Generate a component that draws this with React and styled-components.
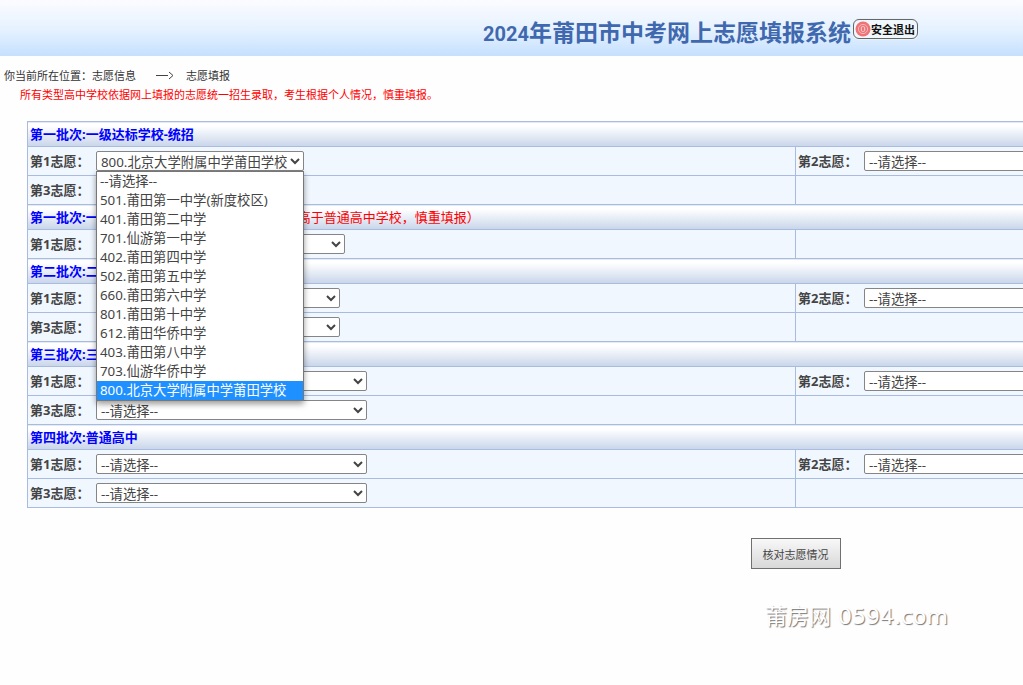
import React, { useState } from "react";

import styled, { createGlobalStyle } from "styled-components";

const EMPTY = "--请选择--";

const schools = [
  EMPTY,
  "501.莆田第一中学(新度校区)",
  "401.莆田第二中学",
  "701.仙游第一中学",
  "402.莆田第四中学",
  "502.莆田第五中学",
  "660.莆田第六中学",
  "801.莆田第十中学",
  "612.莆田华侨中学",
  "403.莆田第八中学",
  "703.仙游华侨中学",
  "800.北京大学附属中学莆田学校",
];

// each row is [left choice, right choice]
const batches = [
  {
    id: "a",
    title: "第一批次:一级达标学校-统招",
    width: 208,
    rows: [
      [1, 2],
      [3, null],
    ],
  },
  {
    id: "b",
    title: "第一批次:一级达标学校-定向",
    note: "（录取的优先级别高于普通高中学校，慎重填报）",
    width: 249,
    rows: [[1, null]],
  },
  {
    id: "c",
    title: "第二批次:二级达标学校",
    width: 244,
    rows: [
      [1, 2],
      [3, null],
    ],
  },
  {
    id: "d",
    title: "第三批次:三级达标学校",
    width: 271,
    rows: [
      [1, 2],
      [3, null],
    ],
  },
  {
    id: "e",
    title: "第四批次:普通高中",
    width: 271,
    rows: [
      [1, 2],
      [3, null],
    ],
  },
];

function Choice({ batch, number, open, value, onChange, onToggle }) {
  const id = `${batch.id}-${number}`;

  return (
    <Field>
      <Label htmlFor={id}>第{number}志愿：</Label>
      <SelectWrap>
        <Select
          id={id}
          $width={batch.width}
          value={value}
          onChange={(e) => onChange(id, e.target.value)}
        >
          {schools.map((school) => (
            <option key={school}>{school}</option>
          ))}
        </Select>
        {open && (
          <Menu role="listbox" aria-label={`第${number}志愿`}>
            {schools.map((school) => (
              <MenuOption
                key={school}
                type="button"
                role="option"
                aria-selected={school === value}
                $selected={school === value}
                onClick={() => {
                  onChange(id, school);
                  onToggle(null);
                }}
              >
                {school}
              </MenuOption>
            ))}
          </Menu>
        )}
      </SelectWrap>
    </Field>
  );
}

function App() {
  const [choices, setChoices] = useState({ "a-1": schools[11] });
  const [openId, setOpenId] = useState("a-1");

  const onChange = (id, value) => setChoices({ ...choices, [id]: value });

  const renderChoice = (batch, number) =>
    number && (
      <Choice
        batch={batch}
        number={number}
        open={openId === `${batch.id}-${number}`}
        value={choices[`${batch.id}-${number}`] || EMPTY}
        onChange={onChange}
        onToggle={setOpenId}
      />
    );

  return (
    <Viewport>
      <GlobalStyle />
      <Page>
        <Header>
          <Title>
            <Year>2024</Year>年莆田市中考网上志愿填报系统
          </Title>
          <ExitButton type="button">
            <svg width="16" height="16" viewBox="0 0 16 16" aria-hidden="true">
              <circle cx="8" cy="8" r="7.5" fill="#ee7377" />
              <circle cx="8" cy="8" r="4.6" fill="none" stroke="#f7b9ba" />
              <rect x="6.3" y="5.6" width="3.4" height="4.8" rx="1.2" fill="none" stroke="#fbd3d3" />
            </svg>
            安全退出
          </ExitButton>
        </Header>

        <Crumbs>
          <span>你当前所在位置：志愿信息</span>
          <svg width="18" height="9" viewBox="0 0 18 9" aria-hidden="true">
            <path
              d="M0 4.5h12M13 1l4 3.5L13 8"
              fill="none"
              stroke="#444"
            />
          </svg>
          <span>志愿填报</span>
        </Crumbs>
        <Notice>
          所有类型高中学校依据网上填报的志愿统一招生录取，考生根据个人情况，慎重填报。
        </Notice>

        <Form onSubmit={(e) => e.preventDefault()}>
          <Table>
            {batches.map((batch) => (
              <tbody key={batch.id}>
                <tr>
                  <BatchHead colSpan={2} scope="rowgroup">
                    {batch.title}
                    {batch.note && <Note>{batch.note}</Note>}
                  </BatchHead>
                </tr>
                {batch.rows.map(([left, right]) => (
                  <tr key={left}>
                    <Cell>{renderChoice(batch, left)}</Cell>
                    <Cell>{renderChoice(batch, right)}</Cell>
                  </tr>
                ))}
              </tbody>
            ))}
          </Table>
          <CheckButton type="submit">核对志愿情况</CheckButton>
        </Form>

        <Watermark>莆房网 0594.com</Watermark>
      </Page>
    </Viewport>
  );
}

const GlobalStyle = createGlobalStyle`
  body {
    margin: 0;
    background: #fefefe;
    color: #444;
    font-family: "Noto Sans", "Noto Sans CJK SC", sans-serif;
  }

  * {
    box-sizing: border-box;
  }
`;

const Viewport = styled.div`
  overflow: hidden;
`;

/* the form is a wide sheet, it runs past the right edge of small windows */
const Page = styled.div`
  min-width: 1591px;
`;

const Header = styled.header`
  display: flex;
  align-items: flex-start;
  gap: 2px;
  height: 56px;
  padding: 15px 0 0 483px;
  background: linear-gradient(#fcfcff, #e4f1ff 55%, #c5e0fe);
`;

const Title = styled.h1`
  margin: 0;
  color: #4068ae;
  font-family: "Noto Sans CJK SC", sans-serif;
  font-size: 23px;
  font-weight: bold;
  line-height: 32px;
`;

const Year = styled.span`
  font-family: Roboto, sans-serif;
  font-size: 20px;
`;

const ExitButton = styled.button`
  display: flex;
  align-items: center;
  height: 20px;
  margin-top: 4px;
  padding: 0 2px 0 1px;
  border: 1px solid #666;
  border-radius: 6px;
  background: #f1f6fc;
  box-shadow: 0 0 0 1px #e6f3fb;
  color: #111;
  font-family: "Noto Sans CJK SC", sans-serif;
  font-size: 11px;
  font-weight: bold;
`;

const Crumbs = styled.nav`
  display: flex;
  align-items: center;
  padding: 10px 0 0 4px;
  color: #333;
  font-family: "Noto Sans CJK SC", sans-serif;
  font-size: 11px;
  line-height: 19px;

  svg {
    margin: 0 12px 0 20px;
  }
`;

const Notice = styled.p`
  margin: 0;
  padding-left: 20px;
  color: #f00;
  font-family: "Noto Sans CJK SC", sans-serif;
  font-size: 11px;
  line-height: 19px;
`;

const Form = styled.form`
  display: flex;
  flex-direction: column;
  align-items: center;
  gap: 30px;
  padding: 17px 27px 0;
`;

const Table = styled.table`
  width: 100%;
  table-layout: fixed;
  border-collapse: collapse;
  border: 1px solid #a9bce0;
  font-size: 13px;
`;

const BatchHead = styled.th`
  height: 25px;
  padding: 0 2px;
  border: 1px solid #a9bce0;
  background: linear-gradient(#fff 15%, #c8d5ea);
  color: #00f;
  line-height: 20px;
  text-align: left;
`;

const Note = styled.span`
  color: #f00;
  font-weight: normal;
`;

const Cell = styled.td`
  height: 29px;
  padding: 0 2px;
  border: 1px solid #a9bce0;
  background: #f1f7ff;
`;

const Field = styled.div`
  display: flex;
  align-items: center;
`;

const Label = styled.label`
  width: 66px;
  font-weight: bold;
  line-height: 20px;
  white-space: nowrap;
`;

const SelectWrap = styled.div`
  position: relative;
  display: flex;
`;

const Select = styled.select`
  width: ${(props) => props.$width}px;
  height: 20px;
  border: 1px solid #858585;
  border-radius: 2px;
  background-color: #fff;
  color: #444;
  font-family: inherit;
`;

const Menu = styled.div`
  position: absolute;
  top: 100%;
  left: 0;
  z-index: 1;
  display: flex;
  flex-direction: column;
  width: 100%;
  border: 1px solid #777;
  background: #fff;
  box-shadow: 0 3px 6px rgba(0, 0, 0, 0.4);
`;

const MenuOption = styled.button`
  height: 19px;
  padding: 0 3px;
  border: 0;
  background: ${(props) => (props.$selected ? "#1e90ff" : "#fff")};
  color: ${(props) => (props.$selected ? "#fff" : "#444")};
  font-family: inherit;
  line-height: 19px;
  text-align: left;
  white-space: nowrap;
`;

const CheckButton = styled.button`
  width: 90px;
  height: 31px;
  padding: 0;
  border: 1px solid #707070;
  background: linear-gradient(#f8f8f8, #d8d8d8);
  color: #444;
  font-family: "Noto Sans CJK SC", sans-serif;
  font-size: 11px;
`;

const Watermark = styled.p`
  margin: 32px 0 0 765px;
  color: #fff;
  font-family: "DejaVu Sans", "Noto Sans CJK SC", sans-serif;
  font-size: 22px;
  line-height: 32px;
  text-shadow: 1px 1px 1px #777;
`;

export default App;
